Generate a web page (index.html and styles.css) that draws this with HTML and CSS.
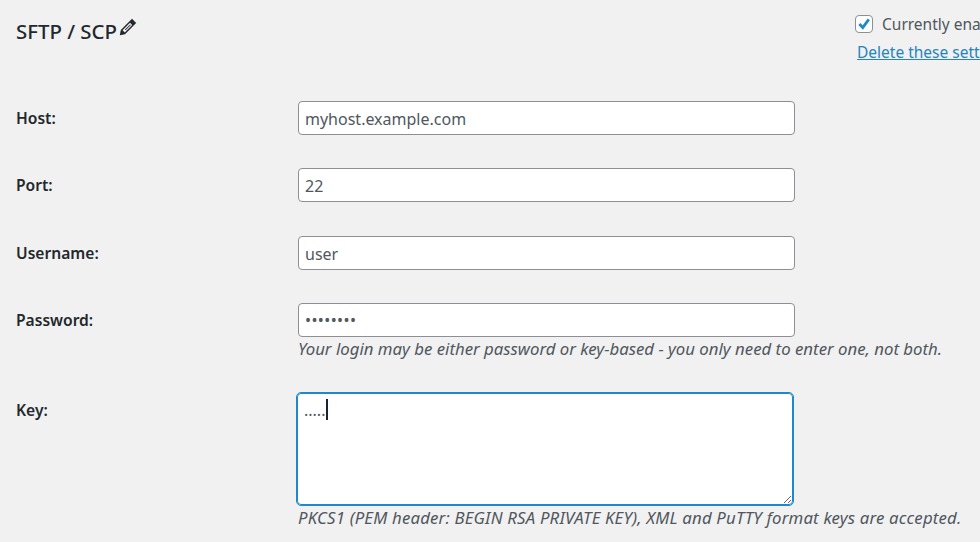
FILE: index.html
```html
<!DOCTYPE html>
<html lang="en">
  <head>
    <meta charset="UTF-8" />
    <title>SFTP / SCP</title>
    <link rel="stylesheet" href="styles.css">
  </head>

  <body>
    <header class="head">
      <h2 class="head__title">
        SFTP / SCP
        <svg class="head__edit" viewBox="0 0 18 18" width="18" height="18" aria-hidden="true">
          <path d="M13 0.8 17.2 5 6 16.2 0.8 17.2 1.8 12Z" fill="#23282d"/>
          <path d="M3.6 12.2 11 4.8 13.2 7 5.8 14.4Z" fill="#f1f1f1"/>
          <path d="M6 11.6 11.2 6.4 11.8 7 6.6 12.2Z" fill="#23282d"/>
        </svg>
      </h2>
      <div class="head__side">
        <label class="enable">
          <span class="enable__box">
            <svg viewBox="0 0 18 18" width="18" height="18" aria-hidden="true">
              <path d="M4.4 9 7.8 12.6 13.8 4.4" fill="none" stroke="#1e88c8" stroke-width="2.8"/>
            </svg>
          </span>
          Currently enabled
        </label>
        <a class="head__delete" href="#">Delete these settings</a>
      </div>
    </header>

    <div class="form">
      <div class="form__row">
        <label class="form__label">Host:</label>
        <div class="form__field"><input class="form__input" type="text" value="myhost.example.com"></div>
      </div>
      <div class="form__row">
        <label class="form__label">Port:</label>
        <div class="form__field"><input class="form__input" type="text" value="22"></div>
      </div>
      <div class="form__row">
        <label class="form__label">Username:</label>
        <div class="form__field"><input class="form__input" type="text" value="user"></div>
      </div>
      <div class="form__row form__row--note">
        <label class="form__label">Password:</label>
        <div class="form__field">
          <input class="form__input form__input--secret" type="password" value="password">
          <p class="form__note">Your login may be either password or key-based - you only need to enter one, not both.</p>
        </div>
      </div>
      <div class="form__row">
        <label class="form__label">Key:</label>
        <div class="form__field">
          <div class="key">
            <textarea class="key__input">.....</textarea>
            <span class="key__caret"></span>
          </div>
          <p class="form__note form__note--key">PKCS1 (PEM header: BEGIN RSA PRIVATE KEY), XML and PuTTY format keys are accepted.</p>
        </div>
      </div>
    </div>
  </body>
</html>
```

FILE: styles.css
```css
html,
body {
  height: 100%;
}

body {
  margin: 0;
  overflow: hidden;
  background: #f1f1f1;
  color: #3c434a;
  font-family: "Noto Sans", sans-serif;
  font-size: 15.5px;
}

.head {
  display: grid;
  grid-template-columns: 839px 300px;
  height: 101px;
  padding-left: 16px;
}

.head__title {
  margin: 17px 0 0;
  color: #23282d;
  font-size: 20.4px;
  font-weight: 500;
  line-height: 28px;
}

.head__edit {
  margin-left: -3px;
  vertical-align: 3px;
}

.head__side {
  padding-top: 15px;
}

.enable {
  display: flex;
  align-items: center;
  gap: 9px;
  height: 18px;
  color: #50575e;
  white-space: nowrap;
}

.enable__box {
  width: 18px;
  height: 18px;
  box-sizing: border-box;
  border: 1px solid #8c8f94;
  border-radius: 4px;
  background: #fff;
}

.enable__box svg {
  display: block;
  margin: -1px;
}

.head__delete {
  display: block;
  margin: 8px 0 0 2px;
  color: #2584bd;
  white-space: nowrap;
}

.form {
  padding-left: 16px;
}

.form__row {
  display: grid;
  grid-template-columns: 282px 1fr;
  padding-bottom: 33.3px;
}

.form__row--note {
  height: 90px;
  padding-bottom: 0;
}

.form__label {
  padding-top: 6px;
  color: #23282d;
  font-size: 15.6px;
  font-weight: 600;
}

.form__input {
  display: block;
  width: 497px;
  height: 34px;
  box-sizing: border-box;
  padding: 2px 6px 0;
  border: 1px solid #8c8f94;
  border-radius: 4px;
  background: #fff;
  color: #50575e;
  font: inherit;
  font-size: 16px;
}

.form__input--secret {
  padding-top: 0;
  letter-spacing: 0.4px;
}

.form__note {
  margin: 2px 0 0;
  color: #50575e;
  font-size: 16.8px;
  font-style: italic;
  line-height: 20px;
  white-space: nowrap;
}

.form__note--key {
  margin-top: 3px;
  letter-spacing: 0.18px;
}

.key {
  position: relative;
  width: 495px;
  margin-left: -1px;
}

.key__input {
  display: block;
  width: 496px;
  height: 112px;
  box-sizing: border-box;
  margin: 0;
  padding: 5px 6px;
  border: 1px solid #1e88c8;
  border-radius: 4px;
  outline: 1px solid #1e88c8;
  background: #fff;
  color: #50575e;
  font: inherit;
  font-size: 16px;
}

.key__caret {
  position: absolute;
  left: 29px;
  top: 6px;
  width: 1.5px;
  height: 21px;
  background: #1d2327;
}
```
